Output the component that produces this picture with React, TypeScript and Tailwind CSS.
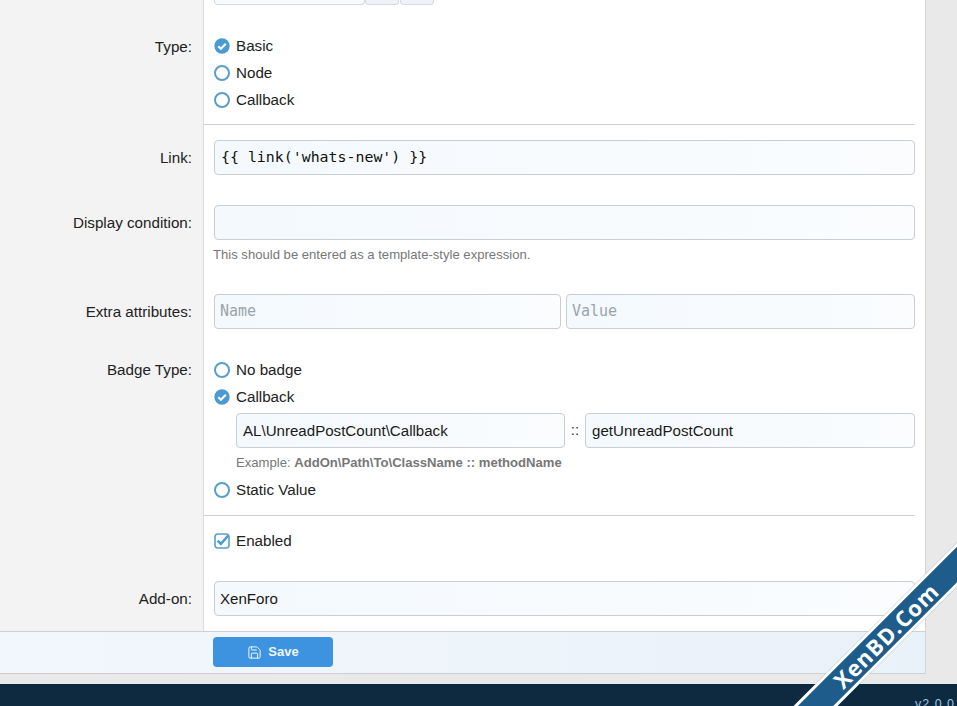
import { Save } from "lucide-react";

const sans = "font-['Liberation_Sans',Arial,sans-serif]";
const mono = "font-['DejaVu_Sans_Mono',monospace]";
const inputBase =
  "h-[35px] rounded-[4px] border border-[#c8ced2] bg-gradient-to-r from-[#f4f9fd] to-[#fafcfe] flex items-center px-[6px] text-[15.1px] text-[#1a1a1a] min-w-0";
const labelCol = "w-[204px] shrink-0 bg-[#f3f3f3] border-r border-[#dcdcdc]";
const labelText = "pr-[11px] text-right text-[15.2px] text-[#222]";

const Radio = ({ checked }: { checked?: boolean }) =>
  checked ? (
    <svg width="16" height="16" viewBox="0 0 16 16" className="shrink-0">
      <circle cx="8" cy="8" r="7.7" fill="#4a9bd4" />
      <path d="M4.3 8.2l2.6 2.6 4.9-5" fill="none" stroke="#fff" strokeWidth="2.2" />
    </svg>
  ) : (
    <span className="w-[16px] h-[16px] rounded-full border-[2px] border-[#5a9fc9] bg-white shrink-0" />
  );

const Choice = ({ label, checked }: { label: string; checked?: boolean }) => (
  <div className="flex items-center h-[27px] gap-[6px] text-[15.2px] text-[#222]">
    <Radio checked={checked} />
    <span className="mt-[2px]">{label}</span>
  </div>
);

const Row = ({ label, top, children }: { label: string; top: string; children: React.ReactNode }) => (
  <div className="flex">
    <div className={`${labelCol} ${labelText} ${top}`}>{label}</div>
    <div className={`flex-1 pl-[10px] pr-[10px] ${top} min-w-0`}>{children}</div>
  </div>
);

const Divider = () => (
  <div className="flex">
    <div className={labelCol} />
    <div className="flex-1 border-t border-[#cfcfcf] mr-[10px]" />
  </div>
);

export default function App() {
  return (
    <div className={`${sans} relative w-[957px] h-[706px] overflow-hidden bg-[#e9e9e9]`}>
      <div className="w-[926px] border-r border-[#d4d4d4]">
        {/* cut off row on top */}
        <div className="flex h-[33px]">
          <div className={labelCol} />
          <div className="flex-1 bg-white pl-[10px]">
            <div className="flex h-[5px]">
              <div className="w-[151px] border border-t-0 border-[#d5dade] rounded-b-[4px] bg-[#f7fbfe]" />
              <div className="w-[34px] border border-t-0 border-[#d5dade] rounded-b-[4px] bg-[#edf3f9]" />
              <div className="w-[34px] ml-px border border-t-0 border-[#d5dade] rounded-b-[4px] bg-[#edf3f9]" />
            </div>
          </div>
        </div>

        <div className="bg-white">
          <div className="flex">
            <div className={`${labelCol} ${labelText} leading-[27px]`}>Type:</div>
            <div className="flex-1 pl-[10px] h-[91px]">
              <div className="-mt-px">
                <Choice label="Basic" checked />
                <Choice label="Node" />
                <Choice label="Callback" />
              </div>
            </div>
          </div>
          <Divider />

          <Row label="Link:" top="pt-[15px] leading-[35px] h-[80px]">
            <div className={`${inputBase} ${mono} !text-[14.9px] text-[#111]`}>{"{{ link('whats-new') }}"}</div>
          </Row>

          <Row label="Display condition:" top="leading-[35px] h-[89px]">
            <div className={inputBase} />
            <div className="text-[13.1px] leading-[30px] text-[#777] -ml-px">
              This should be entered as a template-style expression.
            </div>
          </Row>

          <Row label="Extra attributes:" top="leading-[35px] h-[60px]">
            <div className="flex gap-[5px]">
              <div className={`${inputBase} ${mono} w-[347px] !px-[5px] !text-[15px] !text-[#9aa5ab]`}>Name</div>
              <div className={`${inputBase} ${mono} flex-1 !px-[5px] !text-[15px] !text-[#9aa5ab]`}>Value</div>
            </div>
          </Row>

          <div className="flex h-[161px]">
            <div className={`${labelCol} ${labelText} leading-[32px]`}>Badge Type:</div>
            <div className="flex-1 pl-[10px] pr-[10px] pt-[2px] min-w-0">
              <Choice label="No badge" />
              <Choice label="Callback" checked />
              <div className="pl-[22px] -mb-[2px]">
                <div className="flex items-center mt-[3px]">
                  <div className={`${inputBase} w-[329px] pt-[2px]`}>AL\UnreadPostCount\Callback</div>
                  <span className="w-[20px] text-center text-[15px] text-[#333]">::</span>
                  <div className={`${inputBase} flex-1 pt-[2px]`}>getUnreadPostCount</div>
                </div>
                <div className="text-[13.1px] leading-[30px] text-[#777]">
                  Example: <b>AddOn\Path\To\ClassName :: methodName</b>
                </div>
              </div>
              <Choice label="Static Value" />
            </div>
          </div>

          <Divider />

          <div className="flex h-[49px]">
            <div className={labelCol} />
            <div className="flex-1 pl-[10px] pt-[11px]">
              <div className="flex items-center h-[27px] gap-[6px] text-[15.2px] text-[#222]">
                <svg width="16" height="16" viewBox="0 0 16 16" className="shrink-0">
                  <rect x="1" y="1" width="14" height="14" rx="3" fill="#fff" stroke="#5a9fc9" strokeWidth="1.6" />
                  <path d="M3.6 7.6l3.3 3.3 7.4-8.4" fill="none" stroke="#4a9bd4" strokeWidth="2.6" />
                </svg>
                <span className="mt-[2px]">Enabled</span>
              </div>
            </div>
          </div>

          <Row label="Add-on:" top="pt-[16px] leading-[35px] h-[66px]">
            <div className={`${inputBase} !px-[5px]`}>XenForo</div>
          </Row>
        </div>

        {/* footer bar */}
        <div className="h-[43px] border-y border-[#cfcfcf] bg-gradient-to-r from-[#f2f7fc] to-[#e9f1f9] pl-[213px] pt-[5px]">
          <button className="w-[120px] h-[30px] rounded-[4px] bg-[#3d93e0] text-[#eef6fd] text-[13px] font-bold flex items-center justify-center gap-[6px]">
            <Save size={15} strokeWidth={1.6} />
            Save
          </button>
        </div>
      </div>

      <div className="mt-[10px] h-[22px] bg-[#0e2a40] relative">
        <span className="absolute left-[915px] top-[11px] text-[12.5px] tracking-[1px] text-[#9cc4e0] whitespace-nowrap">v2.0.0</span>
      </div>

      {/* watermark ribbon */}
      <div className="absolute left-[756px] top-[620px] w-[260px] h-[31px] -rotate-45 bg-[#1d5c8b] border-y-[3px] border-white flex items-center justify-center text-white text-[22px] font-bold font-['Open_Sans',sans-serif] tracking-[1px]">
        XenBD.Com
      </div>
    </div>
  );
}
